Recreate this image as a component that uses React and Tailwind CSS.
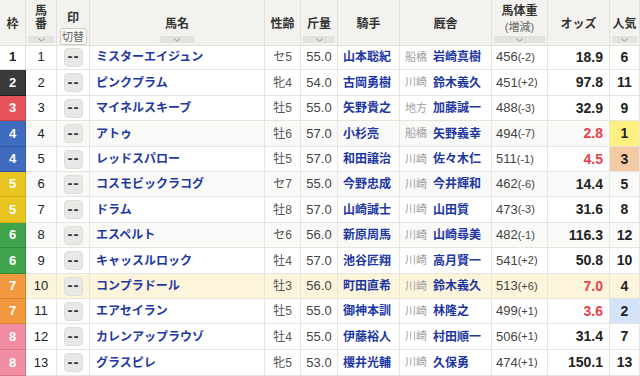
import React from 'react';

const COLS = 'grid grid-cols-[26px_31px_33px_175px_36px_37px_62px_92px_56px_62px_30px]';

const WAKU = {
  1: 'bg-white text-[#222] border-[#e2e0da]',
  2: 'bg-[#3a3a3a] text-white border-[#222]',
  3: 'bg-[#e8535b] text-white border-[#c9424a]',
  4: 'bg-[#3f6cbf] text-white border-[#2f58a4]',
  5: 'bg-[#eac522] text-white border-[#d4ae12]',
  6: 'bg-[#40a44d] text-white border-[#30893c]',
  7: 'bg-[#f2993f] text-white border-[#dc822a]',
  8: 'bg-[#f18da2] text-white border-[#dc7489]',
};

const horses = [
  { w: 1, n: 1, name: 'ミスターエイジュン', sa: 'セ5', kin: '55.0', jockey: '山本聡紀', area: '船橋', trainer: '岩崎真樹', wt: '456', diff: '(-2)', odds: '18.9', pop: 6, h: 'h-[25px]' },
  { w: 2, n: 2, name: 'ピンクプラム', sa: '牝4', kin: '54.0', jockey: '古岡勇樹', area: '川崎', trainer: '鈴木義久', wt: '451', diff: '(+2)', odds: '97.8', pop: 11, h: 'h-[26px]' },
  { w: 3, n: 3, name: 'マイネルスキーブ', sa: '牡5', kin: '55.0', jockey: '矢野貴之', area: '地方', trainer: '加藤誠一', wt: '488', diff: '(-3)', odds: '32.9', pop: 9, h: 'h-[25px]' },
  { w: 4, n: 4, name: 'アトゥ', sa: '牡6', kin: '57.0', jockey: '小杉亮', area: '船橋', trainer: '矢野義幸', wt: '494', diff: '(-7)', odds: '2.8', pop: 1, red: true, popBg: 'bg-[#fdf07f]', stripe: true, h: 'h-[26px]' },
  { w: 4, n: 5, name: 'レッドスパロー', sa: '牡5', kin: '57.0', jockey: '和田譲治', area: '川崎', trainer: '佐々木仁', wt: '511', diff: '(-1)', odds: '4.5', pop: 3, red: true, popBg: 'bg-[#f3caa4]', h: 'h-[25px]' },
  { w: 5, n: 6, name: 'コスモビックラコグ', sa: 'セ7', kin: '55.0', jockey: '今野忠成', area: '川崎', trainer: '今井輝和', wt: '462', diff: '(-6)', odds: '14.4', pop: 5, stripe: true, h: 'h-[25px]' },
  { w: 5, n: 7, name: 'ドラム', sa: '牡8', kin: '57.0', jockey: '山崎誠士', area: '川崎', trainer: '山田質', wt: '473', diff: '(-3)', odds: '31.6', pop: 8, h: 'h-[26px]' },
  { w: 6, n: 8, name: 'エスペルト', sa: 'セ6', kin: '56.0', jockey: '新原周馬', area: '川崎', trainer: '山崎尋美', wt: '482', diff: '(-1)', odds: '116.3', pop: 12, stripe: true, h: 'h-[25px]' },
  { w: 6, n: 9, name: 'キャッスルロック', sa: '牡4', kin: '57.0', jockey: '池谷匠翔', area: '川崎', trainer: '高月賢一', wt: '541', diff: '(+2)', odds: '50.8', pop: 10, h: 'h-[26px]' },
  { w: 7, n: 10, name: 'コンプラドール', sa: '牡3', kin: '56.0', jockey: '町田直希', area: '川崎', trainer: '鈴木義久', wt: '513', diff: '(+6)', odds: '7.0', pop: 4, red: true, hl: true, h: 'h-[25px]' },
  { w: 7, n: 11, name: 'エアセイラン', sa: '牡5', kin: '55.0', jockey: '御神本訓', area: '川崎', trainer: '林隆之', wt: '499', diff: '(+1)', odds: '3.6', pop: 2, red: true, popBg: 'bg-[#d3e3fb]', h: 'h-[25px]' },
  { w: 8, n: 12, name: 'カレンアップラウゾ', sa: '牡4', kin: '55.0', jockey: '伊藤裕人', area: '川崎', trainer: '村田順一', wt: '506', diff: '(+1)', odds: '31.4', pop: 7, h: 'h-[26px]' },
  { w: 8, n: 13, name: 'グラスピレ', sa: '牝5', kin: '53.0', jockey: '櫻井光輔', area: '川崎', trainer: '久保勇', wt: '474', diff: '(+1)', odds: '150.1', pop: 13, h: 'h-[26px]' },
];

function SortBar({ wide }) {
  return (
    <div className={`absolute bottom-[2px] h-[7px] bg-[#e2e2e0] flex items-center justify-center ${wide ? 'w-[35px] left-1/2 -translate-x-1/2' : 'left-[2px] right-[2px]'}`}>
      <svg width="7" height="4" viewBox="0 0 7 4">
        <polyline points="0.5,0.5 3.5,3.3 6.5,0.5" fill="none" stroke="#888" strokeWidth="0.9" />
      </svg>
    </div>
  );
}

const hd = 'relative flex flex-col items-center justify-center border-r border-b border-[#e2e0da] text-[12px] font-bold text-[#333] leading-[14px]';
const cell = 'flex items-center border-r border-b border-[#e6e4de]';

export default function App() {
  return (
    <div className="w-[640px] h-[376px] overflow-hidden bg-white font-['Liberation_Sans','Noto_Sans_CJK_JP',sans-serif]">
      {/* ヘッダー */}
      <div className={`${COLS} h-[45px] bg-[#f3f2ee]`}>
        <div className={`${hd} pt-[2px]`}>枠</div>
        <div className={`${hd} pb-[10px]`}>
          <span>馬</span>
          <span className="mt-[-1px]">番</span>
          <SortBar />
        </div>
        <div className={`${hd} justify-start pt-[11px]`}>
          <span>印</span>
          <span className="mt-[3px] h-[17px] w-[27px] rounded-[3px] border border-[#cfcdc8] bg-[#f8f8f6] text-[11px] font-normal text-[#666] flex items-center justify-center">切替</span>
        </div>
        <div className={`${hd} pt-[2px]`}>
          馬名
          <SortBar wide />
        </div>
        <div className={`${hd} pt-[2px]`}>性齢</div>
        <div className={`${hd} pt-[2px]`}>
          斤量
          <SortBar />
        </div>
        <div className={`${hd} pt-[2px]`}>騎手</div>
        <div className={`${hd} pt-[2px]`}>厩舎</div>
        <div className={`${hd} pb-[8px]`}>
          <span>馬体重</span>
          <span className="mt-[2px] text-[11px] font-normal text-[#666]">(増減)</span>
          <SortBar />
        </div>
        <div className={`${hd} pt-[2px]`}>オッズ</div>
        <div className={`${hd} pt-[2px]`}>
          人気
          <SortBar />
        </div>
      </div>

      {/* 出走馬 */}
      {horses.map((r) => {
        const bg = r.hl ? 'bg-[#fcf5dc]' : r.stripe ? 'bg-[#f9f9f8]' : 'bg-white';
        return (
          <div key={r.n} className={`${COLS} ${r.h} ${bg}`}>
            <div className={`flex items-center justify-center border-r border-b text-[13px] font-bold ${WAKU[r.w]}`}>{r.w}</div>
            <div className={`${cell} justify-center text-[13px] text-[#222]`}>{r.n}</div>
            <div className={`${cell} justify-center`}>
              <span className="w-[19px] h-[19px] rounded-[4px] bg-[#e8e8e6] border border-[#deded9] flex items-center justify-center font-['DejaVu_Sans',sans-serif] text-[12px] font-bold tracking-[1px] text-[#333] pl-[1px]">--</span>
            </div>
            <div className={`${cell} pl-[6px] text-[12px] font-bold text-[#1d37a3]`}>{r.name}</div>
            <div className={`${cell} justify-center text-[12px] text-[#555]`}>{r.sa}</div>
            <div className={`${cell} justify-center text-[13px] text-[#444]`}>{r.kin}</div>
            <div className={`${cell} pl-[5px] text-[12px] font-bold text-[#1d37a3]`}>{r.jockey}</div>
            <div className={`${cell} pl-[5px] gap-[6px]`}>
              <span className="text-[11px] text-[#a0a0a0]">{r.area}</span>
              <span className="text-[12px] font-bold text-[#1d37a3]">{r.trainer}</span>
            </div>
            <div className={`${cell} pl-[4px] text-[13px] text-[#444]`}>
              {r.wt}
              <span className="text-[11px]">{r.diff}</span>
            </div>
            <div className={`${cell} justify-end pr-[6px] text-[14px] font-bold ${r.red ? 'text-[#e8424a]' : 'text-[#222]'}`}>{r.odds}</div>
            <div className={`${cell} justify-center text-[14px] font-bold text-[#222] ${r.popBg || ''}`}>{r.pop}</div>
          </div>
        );
      })}
    </div>
  );
}
